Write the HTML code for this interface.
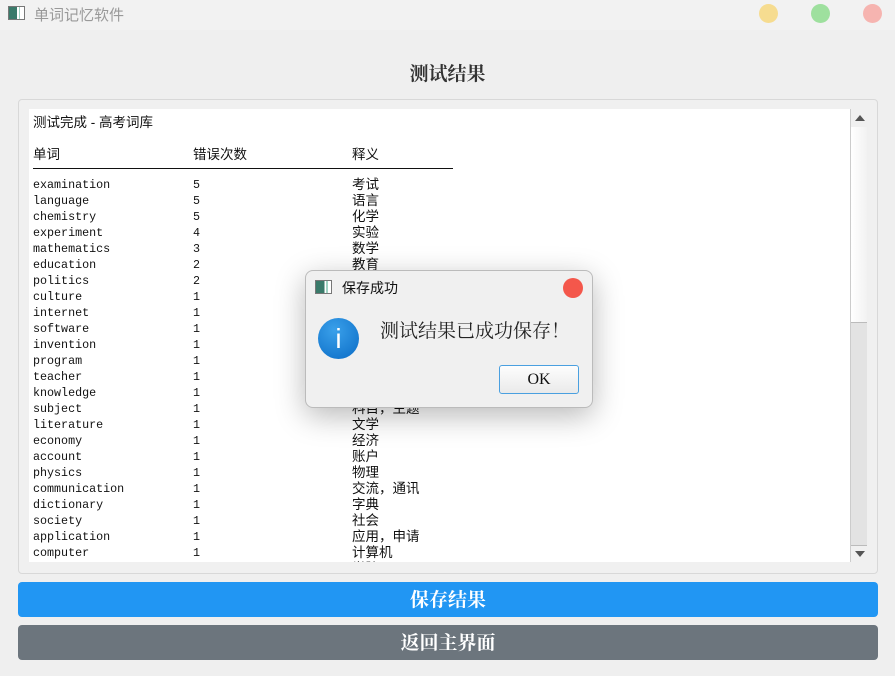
<!DOCTYPE html>
<html><head><meta charset="utf-8"><style>
*{margin:0;padding:0;box-sizing:border-box}
body{width:895px;height:676px;background:#efefef;position:relative;overflow:hidden;font-family:"Liberation Sans","Noto Sans CJK SC",sans-serif}
.abs{position:absolute}
.tb{left:0;top:0;width:895px;height:30px;background:#f2f2f2}
.dot{position:absolute;width:19px;height:19px;border-radius:50%}
.frame{left:18px;top:99px;width:860px;height:475px;border:1px solid #d8d8d8;border-radius:4px;background:#f0f0f0}
.text{left:29px;top:109px;width:821px;height:453px;background:#fff;overflow:hidden}
.row{position:absolute;left:4px;height:16px;line-height:16px;font-size:11.7px;font-family:"Liberation Mono","Noto Sans CJK SC",monospace;color:#111;white-space:nowrap}
.row span{position:absolute;top:0}
.row .c{font-family:"Liberation Sans","Noto Sans CJK SC",sans-serif;font-size:13.5px}
.btn{left:18px;width:860px;height:35px;border-radius:4px;color:#fff;font-family:"Liberation Serif","Noto Serif CJK SC",serif;font-weight:bold;font-size:19px;text-align:center;line-height:37px}
</style></head><body>
<div class="abs tb">
 <div class="abs" style="left:8px;top:6px;width:17px;height:14px;border:1px solid #777;background:linear-gradient(90deg,#3a7a6a 0 55%,#fff 55% 70%,#4a8 70% 75%,#fff 75%)"></div>
 <div class="abs" style="left:34px;top:4px;font-size:15px;color:#999">单词记忆软件</div>
 <div class="dot" style="left:759px;top:4px;background:#f6dc90"></div>
 <div class="dot" style="left:811px;top:4px;background:#9ee09e"></div>
 <div class="dot" style="left:863px;top:4px;background:#f6b4b0"></div>
</div>
<div class="abs" style="left:0;width:895px;top:59px;text-align:center;font-family:'Liberation Serif','Noto Serif CJK SC',serif;font-weight:bold;font-size:19px;color:#333">测试结果</div>
<div class="abs frame"></div>
<div class="abs text" id="t">
 <div class="abs" style="left:4px;top:2px;font-size:13.5px;color:#111">测试完成 - 高考词库</div>
 <div class="abs" style="left:4px;top:34px;font-size:13.5px;color:#111">单词</div>
 <div class="abs" style="left:164px;top:34px;font-size:13.5px;color:#111">错误次数</div>
 <div class="abs" style="left:323px;top:34px;font-size:13.5px;color:#111">释义</div>
 <div class="abs" style="left:4px;top:59px;width:420px;height:1px;background:#111"></div>
</div>
<div class="abs" style="left:850px;top:109px;width:17px;height:453px;background:#f0f0f0;border-left:1px solid #ccc">
 <div class="abs" style="left:4px;top:6px;width:0;height:0;border-left:5px solid transparent;border-right:5px solid transparent;border-bottom:6px solid #555"></div>
 <div class="abs" style="left:0;top:18px;width:16px;height:195px;background:linear-gradient(90deg,#fff,#f2f2f2)"></div>
 <div class="abs" style="left:0;top:213px;width:16px;height:224px;background:#e3e3e3;border-top:1px solid #bbb;border-bottom:1px solid #bbb"></div>
 <div class="abs" style="left:4px;top:442px;width:0;height:0;border-left:5px solid transparent;border-right:5px solid transparent;border-top:6px solid #555"></div>
</div>
<div class="abs btn" style="top:582px;background:#2196f3">保存结果</div>
<div class="abs btn" style="top:625px;background:#6c757d">返回主界面</div>

<div class="abs" style="left:305px;top:270px;width:288px;height:138px;background:#f0f0f0;border:1px solid #bbb;border-radius:8px;box-shadow:0 8px 30px rgba(0,0,0,.28)">
 <div class="abs" style="left:9px;top:9px;width:17px;height:14px;border:1px solid #777;background:linear-gradient(90deg,#3a7a6a 0 55%,#fff 55% 70%,#4a8 70% 75%,#fff 75%)"></div>
 <div class="abs" style="left:36px;top:7px;font-size:14px;color:#111">保存成功</div>
 <div class="abs" style="left:257px;top:7px;width:20px;height:20px;border-radius:50%;background:#f4574b"></div>
 <div class="abs" style="left:12px;top:47px;width:41px;height:41px;border-radius:50%;background:radial-gradient(circle at 40% 30%,#3aa0ea,#0a6cc6);color:#fff;text-align:center;font-size:28px;line-height:41px;font-family:'Liberation Sans',sans-serif">i</div>
 <div class="abs" style="left:74px;top:45px;font-family:'Noto Serif CJK SC',serif;font-size:19px;color:#222">测试结果已成功保存！</div>
 <div class="abs" style="left:193px;top:94px;width:80px;height:29px;border:1px solid #4aa0e0;border-radius:3px;background:linear-gradient(#fdfdfd,#eaeaea);text-align:center;line-height:27px;font-family:'Liberation Serif',serif;font-size:16px;color:#111">OK</div>
</div>
<script>
var d=[["examination",5,"考试"],["language",5,"语言"],["chemistry",5,"化学"],["experiment",4,"实验"],["mathematics",3,"数学"],["education",2,"教育"],["politics",2,"政治"],["culture",1,"文化"],["internet",1,"互联网"],["software",1,"软件"],["invention",1,"发明"],["program",1,"程序"],["teacher",1,"教师"],["knowledge",1,"知识"],["subject",1,"科目，主题"],["literature",1,"文学"],["economy",1,"经济"],["account",1,"账户"],["physics",1,"物理"],["communication",1,"交流，通讯"],["dictionary",1,"字典"],["society",1,"社会"],["application",1,"应用，申请"],["computer",1,"计算机"],["college",1,"学院"]];
var t=document.getElementById('t'),h='';
d.forEach(function(r,i){h+='<div class="row" style="top:'+(68+i*16)+'px"><span style="left:0">'+r[0]+'</span><span style="left:160px">'+r[1]+'</span><span class="c" style="left:319px">'+r[2]+'</span></div>';});
t.insertAdjacentHTML('beforeend',h);
</script>
</body></html>
